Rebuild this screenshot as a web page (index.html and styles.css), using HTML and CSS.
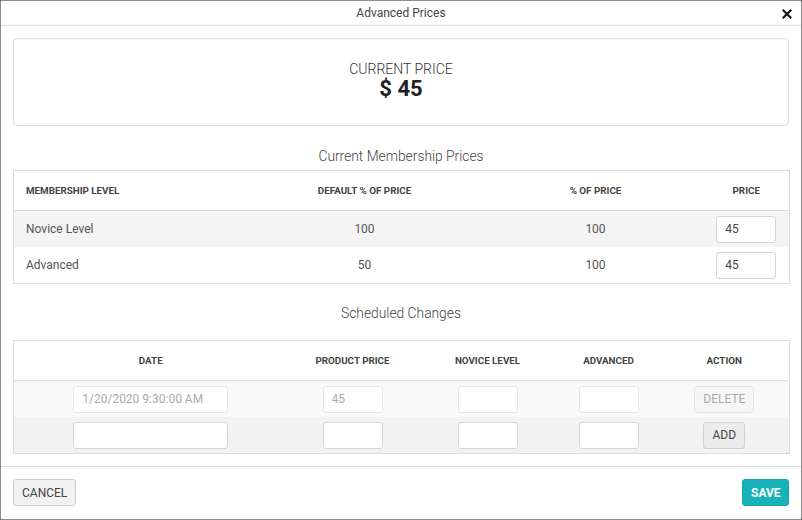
FILE: index.html
```html
<!DOCTYPE html>
<html>
<head>
<meta charset="utf-8">
<link rel="stylesheet" href="styles.css">
</head>
<body>
<div class="modal">
  <div class="modal-header">
    <span class="modal-title">Advanced Prices</span>
    <span class="close"><svg width="10" height="10" viewBox="0 0 10 10"><path d="M1.5 1.5 L8.5 8.5 M8.5 1.5 L1.5 8.5" stroke="#111" stroke-width="2.2" stroke-linecap="square"/></svg></span>
  </div>
  <div class="modal-body">
    <div class="price-box">
      <div class="price-label">CURRENT PRICE</div>
      <div class="price-value">$ 45</div>
    </div>
    <div class="section-title first">Current Membership Prices</div>
    <table class="grid">
      <colgroup><col style="width:228px"><col style="width:246px"><col style="width:216px"><col style="width:86px"></colgroup>
      <thead>
        <tr><th class="left">MEMBERSHIP LEVEL</th><th>DEFAULT % OF PRICE</th><th>% OF PRICE</th><th>PRICE</th></tr>
      </thead>
      <tbody>
        <tr class="shade"><td class="left">Novice Level</td><td>100</td><td>100</td><td><input class="inp sm" value="45"></td></tr>
        <tr><td class="left">Advanced</td><td>50</td><td>100</td><td><input class="inp sm" value="45"></td></tr>
      </tbody>
    </table>
    <div class="section-title second">Scheduled Changes</div>
    <table class="grid">
      <colgroup><col style="width:274px"><col style="width:130px"><col style="width:140px"><col style="width:102px"><col style="width:130px"></colgroup>
      <thead>
        <tr><th>DATE</th><th>PRODUCT PRICE</th><th>NOVICE LEVEL</th><th>ADVANCED</th><th>ACTION</th></tr>
      </thead>
      <tbody>
        <tr class="light"><td><input class="inp lg dis" value="1/20/2020 9:30:00 AM" disabled></td><td><input class="inp sm dis" value="45" disabled></td><td><input class="inp sm dis" disabled></td><td><input class="inp sm dis" disabled></td><td><button class="btn del" disabled>DELETE</button></td></tr>
        <tr class="shade2"><td><input class="inp lg"></td><td><input class="inp sm"></td><td><input class="inp sm"></td><td><input class="inp sm"></td><td><button class="btn add">ADD</button></td></tr>
      </tbody>
    </table>
  </div>
  <div class="modal-footer">
    <button class="btn cancel">CANCEL</button>
    <button class="btn save">SAVE</button>
  </div>
</div>
</body>
</html>
```

FILE: styles.css
```css
html, body {
  margin: 0;
  padding: 0;
  background: #5a5a5a;
}
body {
  font-family: Roboto, "Noto Sans", sans-serif;
  color: #444;
}
.modal {
  width: 802px;
  height: 520px;
  box-sizing: border-box;
  border: 1px solid #8c8c8c;
  background: #fff;
  border-radius: 2px;
  display: flex;
  flex-direction: column;
}
.modal-header {
  height: 24px;
  border-bottom: 1px solid #dcdcdc;
  display: flex;
  align-items: center;
  justify-content: center;
  position: relative;
}
.modal-title {
  font-size: 12px;
  color: #444;
}
.close {
  position: absolute;
  right: 9px;
  top: 8px;
  display: flex;
}
.modal-body {
  padding: 12px 12px 12px;
  flex: 1;
  border-bottom: 1px solid #dcdcdc;
}
.price-box {
  height: 84px;
  border: 1px solid #dcdcdc;
  border-radius: 4px;
  display: flex;
  flex-direction: column;
  align-items: center;
  justify-content: center;
  padding-bottom: 2px;
  box-sizing: content-box;
}
.price-label {
  font-size: 14px;
  font-weight: 300;
  color: #333;
  line-height: 16px;
}
.price-value {
  font-size: 22px;
  font-weight: 700;
  color: #222;
  line-height: 24px;
}
.section-title {
  text-align: center;
  font-size: 13.8px;
  font-weight: 300;
  color: #444;
  line-height: 18px;
}
.section-title.first {
  margin: 21px 0 5px;
}
.section-title.second {
  margin: 20px 0 18px;
}
.grid {
  width: 776px;
  table-layout: fixed;
  border-collapse: collapse;
  border: 1px solid #dcdcdc;
}
.grid th {
  height: 39px;
  font-size: 9.8px;
  font-weight: 700;
  color: #444;
  text-align: center;
  border-bottom: 1px solid #dcdcdc;
  padding: 0 12px;
  white-space: nowrap;
}
.grid td {
  height: 36px;
  font-size: 12px;
  color: #555;
  text-align: center;
  padding: 0 12px;
}
.grid .left {
  text-align: left;
}
.grid tr.shade {
  background: #f4f4f4;
}
.grid tr.light {
  background: #f9f9f9;
}
.grid tr.shade2 {
  background: #f2f2f2;
}
.inp {
  height: 27px;
  box-sizing: border-box;
  border: 1px solid #d6d6d6;
  border-radius: 3px;
  background: #fff;
  font-family: Roboto, sans-serif;
  font-size: 12px;
  color: #444;
  padding: 0 8px;
  vertical-align: middle;
  outline: none;
  margin: 0;
}
.inp.sm {
  width: 60px;
}
.inp.lg {
  width: 155px;
}
.inp.dis {
  border-color: #e6e6e6;
  color: #aaa;
  background: #fff;
}
.btn {
  font-family: Roboto, sans-serif;
  font-size: 12px;
  height: 27px;
  border-radius: 3px;
  box-sizing: border-box;
  padding: 0 8px;
  vertical-align: middle;
  margin: 0;
}
.btn.del {
  width: 60px;
  background: #f6f6f6;
  border: 1px solid #e3e3e3;
  color: #aaa;
}
.btn.add {
  width: 42px;
  background: #ececec;
  border: 1px solid #cfcfcf;
  color: #444;
}
.modal-footer {
  display: flex;
  justify-content: space-between;
  align-items: flex-start;
  padding: 12px 12px 0;
  height: 40px;
}
.btn.cancel {
  width: 63px;
  background: #f2f2f2;
  border: 1px solid #cccccc;
  color: #444;
}
.btn.save {
  width: 47px;
  background: #17b2ba;
  border: 1px solid #14a5ad;
  color: #fff;
  font-weight: 700;
}
```
